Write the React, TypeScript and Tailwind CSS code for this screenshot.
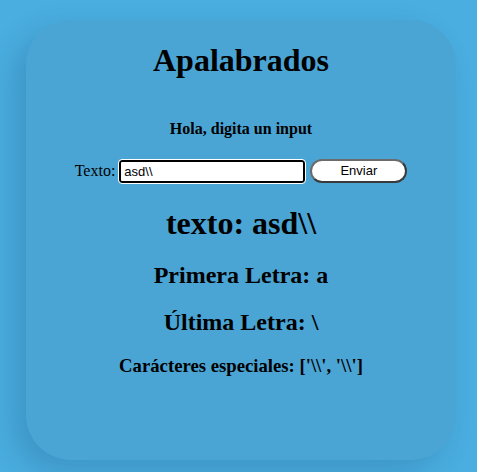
import React, { useState } from 'react';

export default function App() {
  const [value, setValue] = useState('asd\\\\');
  const [texto, setTexto] = useState('asd\\\\');

  const especiales = texto.split('').filter((c) => !/[a-zA-Z0-9\s]/.test(c));

  return (
    <div className="min-h-[472px] w-full bg-[#4aaee0] pt-5 font-['Liberation_Serif',serif] text-black">
      <div className="ml-[26px] mr-[21px] h-[440px] rounded-[45px] bg-[#4aa5d5] pt-[22px] text-center shadow-[-12px_12px_30px_rgba(0,40,80,0.18)]">
        <h1 className="text-[32px] leading-[37px] font-bold">Apalabrados</h1>
        <h4 className="mt-[41px] text-[16px] leading-[18px] font-bold">Hola, digita un input</h4>
        <form
          className="mt-[21px] flex items-center justify-center gap-[4px]"
          onSubmit={(e) => {
            e.preventDefault();
            setTexto(value);
          }}
        >
          <label className="text-[16px]">Texto:</label>
          <input
            value={value}
            onChange={(e) => setValue(e.target.value)}
            className="h-[23px] w-[186px] rounded-[3px] border-2 border-black bg-white px-[3px] font-['Liberation_Sans',sans-serif] text-[13px] outline outline-1 outline-white"
          />
          <button
            type="submit"
            className="ml-[1px] h-[24px] w-[97px] rounded-full border-2 border-t-[#6b6b6b] border-l-[#6b6b6b] border-r-[#3a3a3a] border-b-[#3a3a3a] bg-white font-['Liberation_Sans',sans-serif] text-[13px]"
          >
            Enviar
          </button>
        </form>
        <h1 className="mt-[22px] text-[32px] leading-[37px] font-bold">texto: {texto}</h1>
        <h2 className="mt-[19px] text-[24px] leading-[28px] font-bold">Primera Letra: {texto.charAt(0)}</h2>
        <h2 className="mt-[19px] text-[24px] leading-[28px] font-bold">Última Letra: {texto.charAt(texto.length - 1)}</h2>
        <h3 className="mt-[19px] text-[18.72px] leading-[22px] font-bold">
          Carácteres especiales: [{especiales.map((c) => `'${c === '\\' ? '\\\\' : c}'`).join(', ')}]
        </h3>
      </div>
    </div>
  );
}
